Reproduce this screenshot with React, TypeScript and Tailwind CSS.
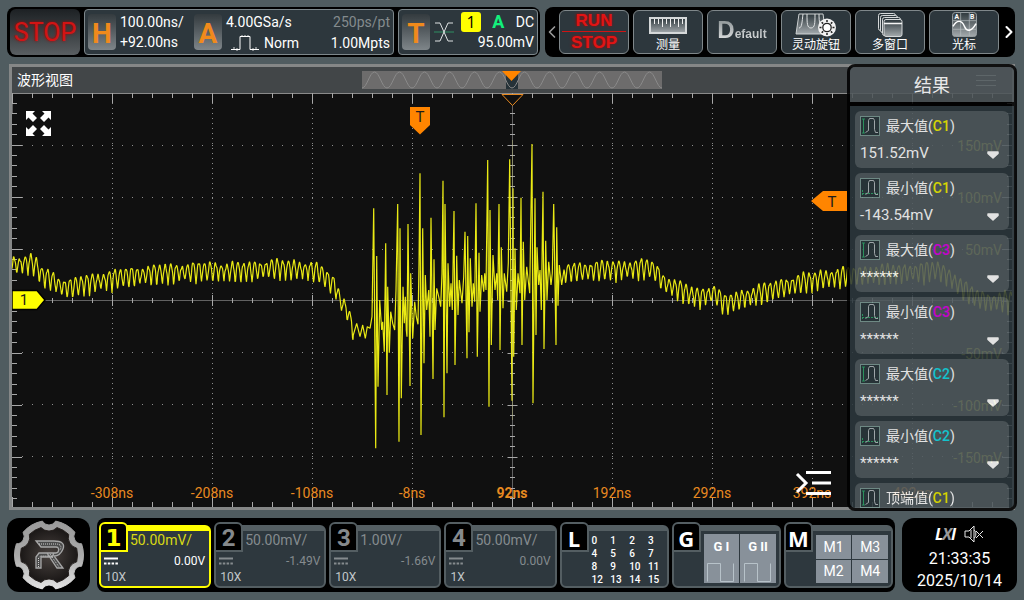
import { ReactNode } from 'react';
import { ChevronLeft, ChevronRight } from 'lucide-react';

/* ---------- waveform data ---------- */

type Point = [number, number];

const leftEnvelope: Point[] = [
  [12, 264], [30, 262], [36, 265], [42, 275], [52, 279], [62, 286], [70, 287], [80, 284],
  [100, 280], [125, 276], [150, 273], [200, 270], [250, 270], [270, 267], [310, 269], [320, 272],
  [330, 281], [336, 287], [340, 300], [345, 305], [350, 318], [353, 328],
];

const rightEnvelope: Point[] = [
  [564, 271], [600, 269], [650, 267], [656, 271], [664, 282], [680, 289], [690, 294], [700, 296],
  [714, 292], [724, 303], [735, 300], [750, 295], [780, 287], [800, 282], [820, 278], [846, 275],
  [870, 273], [920, 271], [938, 269], [950, 276], [960, 286], [975, 296], [990, 301], [1012, 299],
];

const burst: Point[] = [
  [10, 615], [20, 580], [30, 620], [38, 585], [46, 625], [52, 590], [60, 595], [66, 560],
  [71, 235], [77, 955], [80, 378], [84, 770], [89, 510], [95, 600], [98, 575], [103, 665], [107, 340],
  [111, 795], [113, 470], [118, 668], [122, 545], [128, 580], [134, 600], [138, 480], [143, 222],
  [147, 935], [150, 295], [154, 805], [159, 470], [163, 580], [166, 500], [169, 600], [171, 620],
  [174, 282], [180, 768], [182, 430], [188, 625], [194, 515], [199, 560], [204, 583], [207, 400],
  [210, 130], [213, 915], [218, 295], [222, 700], [226, 435], [230, 540], [236, 480], [240, 620],
  [243, 263], [249, 747], [252, 388], [255, 600], [260, 475], [266, 500], [272, 530], [276, 430],
  [279, 152], [282, 862], [285, 222], [291, 730], [294, 400], [299, 530], [303, 460], [307, 540],
  [312, 243], [315, 705], [320, 377], [324, 555], [328, 450], [336, 520], [341, 440], [345, 305],
  [351, 685], [353, 318], [357, 607], [361, 385], [366, 530], [370, 460], [374, 515], [378, 220],
  [382, 680], [387, 368], [390, 545], [395, 435], [401, 485], [404, 430], [408, 480], [413, 90],
  [417, 830], [420, 240], [424, 645], [429, 375], [435, 480], [440, 430], [443, 510], [447, 222],
  [450, 660], [454, 352], [459, 535], [463, 430], [470, 485], [475, 400], [479, 88], [486, 812],
  [489, 175], [491, 680], [495, 355], [499, 540], [504, 430], [510, 490], [513, 203], [516, 645],
  [520, 335], [524, 510], [530, 410], [539, 490], [546, 42], [549, 820], [555, 205], [558, 615],
  [561, 352], [566, 465], [570, 420], [574, 540], [579, 185], [582, 657], [587, 332], [591, 510],
  [596, 395], [603, 465], [607, 430], [611, 222], [618, 645], [620, 292], [624, 527], [628, 405],
  [635, 465],
];

function levelAt(envelope: Point[], x: number) {
  for (let i = 1; i < envelope.length; i++) {
    const [x0, y0] = envelope[i - 1];
    const [x1, y1] = envelope[i];
    if (x <= x1) return y0 + ((y1 - y0) * (x - x0)) / (x1 - x0);
  }
  return envelope[envelope.length - 1][1];
}

function ripple(envelope: Point[]): Point[] {
  const points: Point[] = [];
  const end = envelope[envelope.length - 1][0];
  for (let x = envelope[0][0]; x <= end; x += 0.5) {
    const phase = ((x / 5.6) % 1) * Math.PI;
    const swing = 9.5 + 2.5 * Math.sin(x / 4.3) * Math.sin(x / 13);
    const wave = 1 - 2 * Math.abs(Math.sin(phase));
    const noise = 1.6 * Math.sin(x * 2.9) * Math.sin(x * 0.37);
    points.push([x, levelAt(envelope, x) + 3 + wave * swing + noise]);
  }
  return points;
}

const trace = [
  ...ripple(leftEnvelope),
  ...burst.map(([x, y]): Point => [350 + x / 3, 130 + y / 3]),
  ...ripple(rightEnvelope),
]
  .map(([x, y]) => `${x.toFixed(1)},${y.toFixed(1)}`)
  .join(' ');

/* ---------- graticule ---------- */

function graticulePaths() {
  let ticks = '';
  let dots = '';
  for (let i = 0; i <= 50; i++) {
    const x = 12.5 + i * 20;
    const major = i % 5 === 0;
    const len = major ? 10 : 5;
    ticks += `M${x} 93v${len}M${x} 507v-${len}M${x} ${major ? 295 : 298}v${major ? 11 : 5}`;
  }
  for (let i = -20; i <= 20; i++) {
    const y = Math.round(300.5 + i * 10.4) + 0.5;
    if (y < 94 || y > 506) continue;
    const major = i % 5 === 0;
    const len = major ? 10 : 5;
    ticks += `M12 ${y}h${len}M1012 ${y}h-${len}M${512.5 - len / 2} ${y}h${len}`;
  }
  for (let c = 1; c < 10; c++) {
    if (c === 5) continue;
    for (let y = 103; y < 500; y += 5) dots += `M${12 + c * 100} ${y + 0.5}h1`;
  }
  [145, 197, 249, 352, 404, 456].forEach((y) => {
    for (let x = 22; x < 1010; x += 10) dots += `M${x} ${y + 0.5}h1`;
  });
  return { ticks, dots };
}

const { ticks, dots } = graticulePaths();

const timeLabels = ['-308ns', '-208ns', '-108ns', '-8ns', '92ns', '192ns', '292ns', '392ns', '492ns'];
const voltLabels: [string, number][] = [
  ['150mV', 151], ['100mV', 203], ['50mV', 255], ['-50mV', 359], ['-100mV', 411], ['-150mV', 463],
];

function Plot() {
  return (
    <svg viewBox="12 93 1000 414" className="block h-auto w-full bg-[#101010] font-['Roboto','Liberation_Sans',sans-serif]">
      <path d={dots} stroke="#8e8e8e" strokeWidth="1" fill="none" />
      <path d="M12 93.5H1012" stroke="#8a8a8a" fill="none" />
      <path d="M12 300.5H1012M512.5 93V507M12.5 93v21" stroke="#626262" fill="none" />
      <path d={ticks} stroke="#a8a8a8" strokeWidth="1" fill="none" />
      <g fill="#e98a20" fontSize="14" textAnchor="middle">
        {timeLabels.map((label, i) => (
          <text key={label} x={112 + i * 100} y="498" fontWeight={label === '92ns' ? 700 : 400}>
            {label}
          </text>
        ))}
      </g>
      <g fill="#c0c030" fontSize="14" textAnchor="end">
        {voltLabels.map(([label, y]) => (
          <text key={label} x="1002" y={y}>{label}</text>
        ))}
      </g>
      <polyline points={trace} fill="none" stroke="#eaea14" strokeWidth="1.200" strokeLinejoin="bevel" />
      <path d="M512.5 140V420" stroke="#c8c880" strokeOpacity="0.400" fill="none" />
      <path d="M502 94.5h21l-10.500 11z" fill="#101010" stroke="#e98a20" />
      <path d="M410 107h20v18l-10 9.500l-10-9.500z" fill="#ff8500" />
      <text x="420" y="122" fontSize="15" textAnchor="middle" fill="#1c1c1c">T</text>
      <path d="M811 201l12-10h24v20h-24z" fill="#ff8500" />
      <text x="832" y="206.500" fontSize="15" textAnchor="middle" fill="#1c1c1c">T</text>
      <path d="M12 290.500h25l8 9.500l-8 9.500h-25z" fill="#ffff00" stroke="#000" strokeWidth="1.500" />
      <text x="24" y="305" fontSize="15" textAnchor="middle" fill="#1c1c1c">1</text>
      <g fill="#fff">
        <path d="M26 111h9l-2.500 2.500l4.500 4.500l-4 4l-4.500-4.500l-2.500 2.500z" />
        <path d="M51 111h-9l2.500 2.500l-4.500 4.500l4 4l4.500-4.500l2.500 2.500z" />
        <path d="M26 136h9l-2.500-2.500l4.500-4.500l-4-4l-4.500 4.500l-2.500-2.500z" />
        <path d="M51 136h-9l2.500-2.500l-4.500-4.500l4-4l4.500 4.500l2.500-2.500z" />
      </g>
      <path d="M806 472.500h25M812 483h19M806 493.500h25M797 474l9 9l-9 9" fill="none" stroke="#fff" strokeWidth="3" />
    </svg>
  );
}

function MemoryBar() {
  let wave = 'M0 17';
  for (let i = 0; i < 12; i++) wave += 'c5 0 7.500 -16 12.500 -16s7.500 16 12.500 16';
  return (
    <svg viewBox="0 0 300 18" className="block h-[18px] w-[300px]">
      <rect width="300" height="18" fill="#6d6c6c" />
      <rect x="144" width="12" height="18" fill="#263238" />
      <path d={wave} fill="none" stroke="#8a8a8a" />
      <path d="M140 0h19l-9.500 10z" fill="#ff8500" />
    </svg>
  );
}

/* ---------- toolbar ---------- */

function Letter({ children }: { children: string }) {
  return (
    <span className="flex h-9 w-7 shrink-0 items-center justify-center rounded bg-linear-to-b from-[#343b3f] to-[#7f868a] pt-1 text-[28px] font-bold leading-none text-[#f08a1c]">
      {children}
    </span>
  );
}

function AcquireIcon() {
  return (
    <svg viewBox="0 0 28 16" className="h-4 w-7">
      <path d="M0 14.500h9V1.500h10V14.500h9" fill="none" stroke="#fff" />
      <path d="M3 12v3M6 13v3M11 0v2M14 0v2M17 0v2M22 13v3M25 12v3" stroke="#fff" fill="none" strokeWidth="0.800" />
    </svg>
  );
}

function CrossIcon() {
  return (
    <svg viewBox="0 0 20 20" className="h-5 w-5 shrink-0">
      <path d="M0 10h20" stroke="#2f8f62" fill="none" />
      <path d="M1 1h5l8 18h5M1 19h5l8-18h5" stroke="#dfe3e4" fill="none" />
    </svg>
  );
}

function Defs() {
  return (
    <svg className="absolute h-0 w-0" aria-hidden="true">
      <defs>
        <linearGradient id="metalDark" x1="0" y1="0" x2="0" y2="1">
          <stop offset="0" stopColor="#2e383d" />
          <stop offset="1" stopColor="#a4aaad" />
        </linearGradient>
        <linearGradient id="gear" x1="0" y1="0" x2="0" y2="1">
          <stop offset="0" stopColor="#9a9a9a" />
          <stop offset="0.500" stopColor="#a9a9a9" />
          <stop offset="1" stopColor="#e4e4e4" />
        </linearGradient>
        <radialGradient id="core">
          <stop offset="0" stopColor="#4a4340" />
          <stop offset="1" stopColor="#1b1817" />
        </radialGradient>
      </defs>
    </svg>
  );
}

function RulerIcon() {
  return (
    <svg viewBox="0 0 38 18" className="h-[18px] w-[38px]">
      <rect x="1" y="1" width="36" height="15" fill="url(#metalDark)" stroke="#d5d8d9" strokeWidth="2" />
      <path d="M5.500 2v5M9.500 2v5M13.500 2v8M17.500 2v5M21.500 2v8M25.500 2v5M29.500 2v8M33.500 2v5" stroke="#f0f0f0" fill="none" />
    </svg>
  );
}

function KnobIcon() {
  const rays = Array.from({ length: 8 }, (_, i) => {
    const a = (i * Math.PI) / 4;
    return `M${32 + 5.5 * Math.cos(a)} ${14.5 + 5.5 * Math.sin(a)}L${32 + 7.5 * Math.cos(a)} ${14.5 + 7.5 * Math.sin(a)}`;
  }).join('');
  return (
    <svg viewBox="0 0 42 24" className="h-6 w-[42px]">
      <path d="M4 1h24l3 20H1z" fill="url(#metalDark)" stroke="#cdd1d2" />
      <path d="M8 1c-1 8-1 14-4 14M12 1c0 9 0 14 4 14s4-5 4-14M24 1c0 8 1 14 4 14" fill="none" stroke="#dfe2e3" />
      <circle cx="32" cy="14.500" r="9" fill="#f2f2f2" />
      <circle cx="32" cy="14.500" r="4.200" fill="#fff" stroke="#222" strokeWidth="1.300" />
      <path d={rays} stroke="#222" strokeWidth="1.500" fill="none" />
    </svg>
  );
}

function WindowsIcon() {
  return (
    <svg viewBox="0 0 26 24" className="h-6 w-[26px]">
      <g fill="#2e383d" stroke="#d5d8d9">
        <rect x="1.500" y="0.500" width="17" height="17" rx="2" />
        <rect x="3.500" y="2.500" width="17" height="17" rx="2" />
        <rect x="5.500" y="4.500" width="18" height="18" rx="2" />
        <rect x="7" y="6.500" width="18" height="17" rx="2" fill="url(#metalDark)" />
      </g>
      <path d="M7 10.500h18" stroke="#f4f4f4" strokeWidth="1.500" />
    </svg>
  );
}

function CursorIcon() {
  return (
    <svg viewBox="0 0 26 26" className="h-[25px] w-[25px]">
      <rect x="0.500" y="0.500" width="25" height="25" rx="3" fill="url(#metalDark)" stroke="#9aa1a4" />
      <path d="M1 9h24M1 18h24M9 1v24M18 1v24" stroke="#b8bdbf" strokeWidth="0.700" />
      <path d="M1 15c4-7 9-7 12 0s8 4 12-3" fill="none" stroke="#fff" strokeWidth="1.500" />
      <g fill="#fff" fontSize="7" fontWeight="700" textAnchor="middle">
        <text x="5" y="7.500">A</text>
        <text x="21" y="7.500">B</text>
      </g>
    </svg>
  );
}

function ToolButton({ children }: { children: ReactNode }) {
  return (
    <button className="flex min-w-0 flex-1 flex-col items-center justify-end rounded-md border border-[#7f878a] bg-[#2d373d] text-[12px] leading-4 text-white">
      {children}
    </button>
  );
}

function TopBar() {
  return (
    <header className="flex h-[50px] gap-[5px] pl-[7px] pr-[9px]">
      <div className="flex w-[533px] shrink-0 gap-1 rounded-lg bg-black p-[2px] pl-[3px]">
        <button className="w-[70px] shrink-0 rounded-md bg-linear-to-b from-[#1d2124] to-[#5a5f62] text-[25px] leading-none text-[#d21414] [text-shadow:0_0_3px_#a00]">
          STOP
        </button>
        <button className="flex flex-1 items-center rounded border border-[#7d878b] bg-[#2d373d] px-[3px] text-left text-[14px] leading-5 text-white">
          <Letter>H</Letter>
          <span className="w-[78px] shrink-0 pl-1">
            100.00ns/
            <br />
            +92.00ns
          </span>
          <Letter>A</Letter>
          <span className="flex flex-1 flex-col gap-px pl-1">
            <span className="flex justify-between">
              <span>4.00GSa/s</span>
              <span className="text-[#848b8e]">250ps/pt</span>
            </span>
            <span className="flex items-center justify-between">
              <span className="flex items-center gap-[5px] pl-[5px]">
                <AcquireIcon />
                Norm
              </span>
              <span>1.00Mpts</span>
            </span>
          </span>
        </button>
        <button className="flex w-[140px] shrink-0 items-center rounded border border-[#7d878b] bg-[#2d373d] px-[3px] text-[14px] text-white">
          <Letter>T</Letter>
          <span className="flex w-7 shrink-0 justify-center"><CrossIcon /></span>
          <span className="flex flex-1 flex-col items-end">
            <span className="flex w-full items-center justify-between pl-[3px]">
              <span className="flex h-5 w-5 items-center justify-center rounded-[3px] bg-[#ffff00] font-['Open_Sans',sans-serif] text-[16px] leading-none text-black">1</span>
              <span className="text-[18px] font-bold leading-5 text-[#12f07c]">A</span>
              <span className="leading-5">DC</span>
            </span>
            <span className="leading-5">95.00mV</span>
          </span>
        </button>
      </div>

      <nav className="flex min-w-0 flex-1 rounded-lg bg-black py-[3px]">
        <button aria-label="Previous" className="flex w-[14px] shrink-0 items-center justify-center overflow-hidden text-[#9a9a9a]">
          <ChevronLeft className="h-5 w-5 shrink-0" strokeWidth={2} />
        </button>
        <div className="flex min-w-0 flex-1 gap-1">
          <ToolButton>
            <span className="flex w-full flex-1 flex-col items-center justify-center font-['Liberation_Sans',sans-serif] text-[17px] font-bold leading-[21px] text-[#e01414] [text-shadow:0_0_3px_#a00]">
              RUN
              <span className="h-px w-16 bg-[#d01414]" />
              STOP
            </span>
          </ToolButton>
          <ToolButton>
            <span className="mb-[2px]"><RulerIcon /></span>
            测量
          </ToolButton>
          <ToolButton>
            <span className="flex flex-1 items-center font-['Liberation_Sans',sans-serif]">
              <span className="block bg-linear-to-b from-[#7f878a] to-white bg-clip-text text-[12px] font-bold leading-7 text-transparent">
                <span className="text-[24px]">D</span>efault
              </span>
            </span>
          </ToolButton>
          <ToolButton>
            <KnobIcon />
            灵动旋钮
          </ToolButton>
          <ToolButton>
            <WindowsIcon />
            多窗口
          </ToolButton>
          <ToolButton>
            <CursorIcon />
            光标
          </ToolButton>
        </div>
        <button aria-label="Next" className="flex w-4 shrink-0 items-center justify-center overflow-hidden pl-1 text-white">
          <ChevronRight className="h-5 w-5 shrink-0" strokeWidth={2.5} />
        </button>
      </nav>
    </header>
  );
}

/* ---------- results panel ---------- */

type Measurement = { name: string; channel: 'C1' | 'C2' | 'C3'; value?: string; top: boolean };

const measurements: Measurement[] = [
  { name: '最大值', channel: 'C1', value: '151.52mV', top: true },
  { name: '最小值', channel: 'C1', value: '-143.54mV', top: false },
  { name: '最大值', channel: 'C3', value: '******', top: true },
  { name: '最小值', channel: 'C3', value: '******', top: false },
  { name: '最大值', channel: 'C2', value: '******', top: true },
  { name: '最小值', channel: 'C2', value: '******', top: false },
  { name: '顶端值', channel: 'C1', top: true },
];

const channelColor = { C1: 'text-[#f0f000]', C2: 'text-[#14dce6]', C3: 'text-[#e000e8]' };

function PulseIcon({ top }: { top: boolean }) {
  return (
    <svg viewBox="0 0 20 20" className="h-5 w-5 shrink-0">
      <rect x="0.500" y="0.500" width="19" height="19" fill="#2b383d" stroke="#7c9a94" />
      <path d={top ? 'M3.500 3v14M2 3h3M2 17h3' : 'M2.500 12v6M2 15.500h16'} stroke="#2fa368" strokeDasharray={top ? undefined : '2 1'} fill="none" />
      <path d="M5.500 16.500l3-2V4.500l1-2h4l1 2v9l1 3h2.500" fill="none" stroke="#c2cacc" strokeWidth="0.900" />
    </svg>
  );
}

function ResultsPanel() {
  return (
    <aside className="absolute -bottom-1 -right-[5px] -top-[3px] flex w-[170px] flex-col overflow-hidden rounded-lg border-[3px] border-black bg-[#2c373d] text-white opacity-88">
      <div className="relative flex h-[39px] shrink-0 items-center justify-center border-b-4 border-black bg-[#4e5659] pt-[2px] text-[18px]">
        结果
        <span className="absolute right-[18px] top-2 flex flex-col gap-1">
          <span className="h-px w-5 bg-[#626b6e]" />
          <span className="h-px w-5 bg-[#626b6e]" />
          <span className="h-px w-5 bg-[#626b6e]" />
        </span>
      </div>
      <div className="flex min-h-0 flex-1 flex-col gap-[5px] overflow-hidden p-[5px]">
        {measurements.map((m, i) => (
          <button key={i} className="flex h-[57px] shrink-0 flex-col rounded-md bg-[#505b5f] px-[5px] pt-[5px] text-left text-[15px]">
            <span className="flex h-5 items-center gap-[6px] text-[14px]">
              <PulseIcon top={m.top} />
              <span>
                {m.name}(<span className={`font-medium ${channelColor[m.channel]}`}>{m.channel}</span>)
              </span>
            </span>
            {m.value && (
              <span className="flex h-8 w-full items-center justify-between pr-1 pt-px">
                <span className="leading-5">{m.value}</span>
                <svg viewBox="0 0 14 10" className="mt-1 h-[10px] w-[14px]">
                  <path d="M2 2h10v1.500L7 8L2 3.500z" fill="#fff" stroke="#fff" strokeWidth="1.500" strokeLinejoin="round" />
                </svg>
              </span>
            )}
          </button>
        ))}
      </div>
    </aside>
  );
}

function WaveformView() {
  return (
    <main className="relative ml-[9px] mr-[9px] mt-[7px] border-[3px] border-[#858787]">
      <div className="grid h-[26px] grid-cols-[1fr_auto_1fr] items-center bg-[#424648] px-[5px] text-[14px] text-white">
        <h1>波形视图</h1>
        <MemoryBar />
      </div>
      <Plot />
      <ResultsPanel />
    </main>
  );
}

/* ---------- bottom bar ---------- */

function cog(radius: number, halfTooth: number, bite: number) {
  const at = (a: number) => `${(41 + radius * Math.cos(a)).toFixed(1)} ${(37 + radius * Math.sin(a)).toFixed(1)}`;
  const step = Math.PI / 3;
  let d = '';
  for (let i = 0; i < 6; i++) {
    const c = i * step;
    d += `${i ? '' : `M${at(c - halfTooth)}`}A${radius} ${radius} 0 0 1 ${at(c + halfTooth)}`;
    d += `A${bite} ${bite} 0 0 0 ${at(c + step - halfTooth)}`;
  }
  return `${d}Z`;
}

function Logo() {
  return (
    <div className="flex w-[83px] shrink-0 items-center justify-center rounded-xl bg-black">
      <svg viewBox="0 0 82 74" className="h-[74px] w-[82px]" role="img" aria-label="Rigol">
        <path d={cog(34.5, 0.33, 7.5)} fill="url(#gear)" stroke="url(#gear)" strokeWidth="1" strokeLinejoin="round" />
        <path d={cog(28.5, 0.24, 11)} fill="url(#core)" stroke="#26211f" strokeWidth="1" strokeLinejoin="round" />
        <path d="M28 23h18c8 0 11 3 9 8s-5 7-9 7l9 12h-6L39 35h9c3 0 4-6 0-6H33zM28 50V39l3-4h15l-2 4H33v11z" fill="#4b4b4b" stroke="#a8a8a8" strokeWidth="1.300" />
        <path d="M31 26h17c5 0 6 3 4 6M30.500 49v-9l2-2h12M42 36l9 13" fill="none" stroke="#d0d0d0" strokeWidth="1" strokeDasharray="1 1" />
      </svg>
    </div>
  );
}

type TileProps = { tag: string; kind: 'active' | 'channel' | 'tool'; children: ReactNode };

const tileStyles = {
  active: {
    width: 'flex-[112_1_0%]',
    edge: 'border-[#ffff00]',
    tag: "text-[#ffff00] font-['DejaVu_Sans',sans-serif] text-[23px]",
  },
  channel: {
    width: 'flex-[112_1_0%]',
    edge: 'border-[#545e62]',
    tag: "text-[#85898c] font-['Roboto',sans-serif] text-[24px]",
  },
  tool: {
    width: 'flex-[109_1_0%]',
    edge: 'border-[#545e62]',
    tag: "text-white font-['Open_Sans',sans-serif] text-[22px]",
  },
};

function Tile({ tag, kind, children }: TileProps) {
  const s = tileStyles[kind];
  return (
    <button className={`relative flex min-w-0 pt-[3px] text-left ${s.width}`}>
      <span className={`block h-full w-full rounded-md border-2 border-t-[6px] bg-[#2e383e] ${s.edge}`}>{children}</span>
      <span className={`absolute left-0 top-0 flex h-[30px] w-[29px] items-center justify-center rounded-t-md border-2 bg-black pt-[2px] font-bold leading-none ${s.edge} ${s.tag}`}>
        {tag}
      </span>
    </button>
  );
}

type Channel = { tag: string; scale: string; offset: string; probe: string; active?: boolean };

const channels: Channel[] = [
  { tag: '1', scale: '50.00mV/', offset: '0.00V', probe: '10X', active: true },
  { tag: '2', scale: '50.00mV/', offset: '-1.49V', probe: '10X' },
  { tag: '3', scale: '1.00V/', offset: '-1.66V', probe: '10X' },
  { tag: '4', scale: '50.00mV/', offset: '0.00V', probe: '1X' },
];

function ChannelTile({ tag, scale, offset, probe, active }: Channel) {
  return (
    <Tile tag={tag} kind={active ? 'active' : 'channel'}>
      <span className={`block pl-[29px] text-[14px] leading-[18px] ${active ? 'text-[#d8d814]' : 'text-[#858b8e]'}`}>{scale}</span>
      <span className={`mt-1 flex items-center justify-between pl-[3px] pr-1 text-[12px] leading-4 ${active ? 'text-white' : 'text-[#858b8e]'}`}>
        <svg viewBox="0 0 14 8" className="h-2 w-[14px]">
          <path d="M0 1.500h14" stroke="currentColor" strokeWidth="2" />
          <path d="M0 6.500h14" stroke="currentColor" strokeWidth="2" strokeDasharray="2.500 1.300" />
        </svg>
        {offset}
      </span>
      <span className="block pl-1 text-[12px] leading-4 text-[#c3c8ca]">{probe}</span>
    </Tile>
  );
}

function BottomBar() {
  return (
    <footer className="mt-2 flex h-[74px] gap-[7px] pl-[7px] pr-[7px]">
      <Logo />
      <div className="flex min-w-0 flex-1 gap-[3px] rounded-lg bg-black px-[2px] py-1">
        {channels.map((c) => (
          <ChannelTile key={c.tag} {...c} />
        ))}
        <Tile tag="L" kind="tool">
          <span className="grid grid-cols-4 pl-[30px] pt-[3px] text-[10px] font-medium leading-[13px] text-white">
            {Array.from({ length: 16 }, (_, i) => (
              <span key={i}>{i}</span>
            ))}
          </span>
        </Tile>
        <Tile tag="G" kind="tool">
          <span className="flex h-full gap-px pb-[3px] pl-[30px] pr-[3px] pt-[3px] text-[13px] font-bold text-white">
            {['G I', 'G II'].map((label) => (
              <span key={label} className="flex flex-1 flex-col items-center justify-between bg-[#88919a] pb-px pt-1 leading-[18px]">
                {label}
                <svg viewBox="0 0 30 20" className="h-5 w-[30px]">
                  <path d="M1.500 19.500V1.500h13V19.500h13V1.500" fill="none" stroke="#b7c2c9" />
                </svg>
              </span>
            ))}
          </span>
        </Tile>
        <Tile tag="M" kind="tool">
          <span className="grid h-full grid-cols-2 grid-rows-2 gap-px pb-[3px] pl-[30px] pr-[3px] pt-1 text-[14px] text-white">
            {['M1', 'M3', 'M2', 'M4'].map((label) => (
              <span key={label} className="flex items-center justify-center bg-[#88919a] leading-4">{label}</span>
            ))}
          </span>
        </Tile>
      </div>
      <div className="flex w-[115px] shrink-0 flex-col items-center rounded-xl bg-black pt-1 text-[16px] leading-[22px] text-white">
        <span className="flex h-6 items-center gap-2">
          <span className="flex items-center font-['Open_Sans',sans-serif] text-[16px] font-bold italic">
            L<span className="-mx-px text-[#9a9a9a]">X</span>I
          </span>
          <svg viewBox="0 0 20 18" className="h-[18px] w-5" fill="none" stroke="#e8e8e8">
            <path d="M1 6h4l5-5v16l-5-5H1zM7 5v8M12 6l7 7M19 6l-7 7" />
            <path d="M10 5c2.500 1 2.500 7 0 8" />
          </svg>
        </span>
        <time className="pt-[3px] leading-[22px]">21:33:35</time>
        <time>2025/10/14</time>
      </div>
    </footer>
  );
}

export default function App() {
  return (
    <div className="flex min-h-screen flex-col overflow-hidden bg-[#505c60] pb-2 pt-[7px] font-['Roboto','Noto_Sans_CJK_SC',sans-serif]">
      <Defs />
      <TopBar />
      <WaveformView />
      <BottomBar />
    </div>
  );
}
